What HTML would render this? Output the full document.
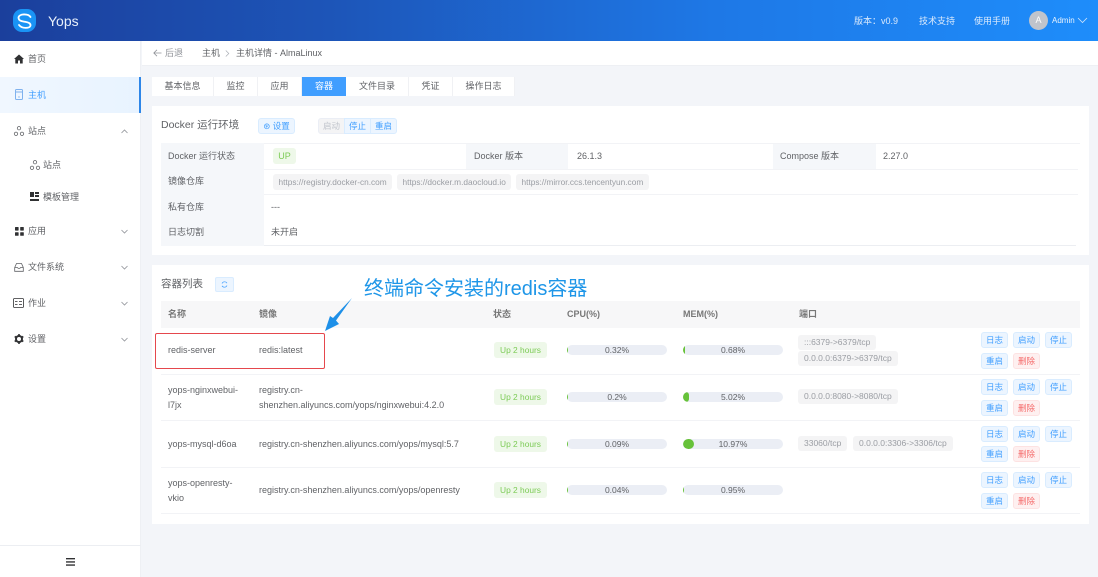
<!DOCTYPE html>
<html><head><meta charset="utf-8"><style>
*{box-sizing:border-box;margin:0;padding:0}
html,body{width:1098px;height:577px;overflow:hidden;background:#f3f5f9;font-family:"Liberation Sans","Noto Sans CJK SC",sans-serif;color:#606266;font-size:9px}
#w{position:absolute;left:0;top:0;width:1098px;height:577px;overflow:hidden;filter:blur(.35px)}
.a{position:absolute}
.t{position:absolute;white-space:nowrap;line-height:12px;height:12px}
.b{position:absolute;background:#fff}
.tag{position:absolute;height:15px;line-height:15px;border-radius:3px;background:#f4f4f5;color:#9a9da3;padding:0 6px;white-space:nowrap;font-size:8.5px}
.tag.u{height:16px;line-height:16px;font-size:8.3px;padding:0 5.5px}
.up{position:absolute;left:494px;width:53px;height:16px;line-height:16px;text-align:center;background:#eef8e9;color:#7ccb55;border-radius:3px;font-size:8.4px}
.bar{position:absolute;width:100px;height:10px;border-radius:5px;background:#ebeef5;overflow:hidden;text-align:center;line-height:10px;font-size:8.5px;color:#606266}
.bar i{position:absolute;left:0;top:0;height:10px;background:#67c23a;border-radius:5px}
.btn{position:absolute;width:27px;height:16px;line-height:15px;text-align:center;background:#ecf5ff;border:1px solid #d9ecff;color:#409eff;border-radius:3px;font-size:8.5px}
.btn.r{background:#fef0f0;border-color:#fde2e2;color:#f56c6c}
.line{position:absolute;height:1px;background:#f2f3f6}
.tab{position:absolute;top:77px;height:19px;line-height:19px;background:#fff;text-align:center;border-right:1px solid #f0f1f4;font-size:9px;color:#606266}
svg{position:absolute;overflow:visible}
</style></head><body><div id="w">

<!-- header -->
<div class="a" style="left:0;top:0;width:1098px;height:41px;background:linear-gradient(90deg,#1b3f9c 0%,#1d55b8 30%,#1e78e6 65%,#1e8dfb 100%)"></div>
<div class="a" style="left:13px;top:9px;width:23px;height:23px;border-radius:9px;background:#1a94f5"></div>
<svg style="left:13px;top:9px" width="23" height="23" viewBox="0 0 23 23"><path d="M17.5 8C15.5 4.5 6 4.5 5.5 8.5C5.5 12 9 12.2 12 12.8C15 13.4 17.8 14 17.5 16.5C17 19.5 9 20 6 16" fill="none" stroke="#fff" stroke-width="1.8" stroke-linecap="round"/></svg>
<div class="t" style="left:48px;top:13px;height:16px;line-height:16px;font-size:14px;color:#e8f0fb">Yops</div>
<div class="t" style="left:854px;top:15px;color:#dbeafc">版本：v0.9</div>
<div class="t" style="left:919px;top:15px;color:#dbeafc">技术支持</div>
<div class="t" style="left:974px;top:15px;color:#dbeafc">使用手册</div>
<div class="a" style="left:1029px;top:11px;width:19px;height:19px;border-radius:50%;background:#c0c4cc;color:#fff;text-align:center;line-height:19px;font-size:9px">A</div>
<div class="t" style="left:1052px;top:15px;color:#e8f2fd;font-size:8px">Admin</div>
<svg style="left:1077px;top:17px" width="11" height="7"><path d="M1 1L5.5 5.5L10 1" fill="none" stroke="#cfe4fb" stroke-width="0.8"/></svg>

<!-- sidebar -->
<div class="b" style="left:0;top:41px;width:141px;height:536px;border-right:1px solid #eef0f4"></div>
<div class="a" style="left:0;top:77px;width:141px;height:36px;background:linear-gradient(90deg,#f0f7ff,#e8f3ff);border-right:2px solid #2e86e8"></div>
<div class="line" style="left:0;top:545px;width:141px;background:#eceef2"></div>

<svg style="left:14px;top:54px" width="10" height="10" viewBox="0 0 10 10"><path d="M5 .5L10 5H8.7V9.5H6V6.5H4V9.5H1.3V5H0Z" fill="#303133"/></svg>
<div class="t" style="left:28px;top:53px">首页</div>
<svg style="left:15px;top:89px" width="8" height="11" viewBox="0 0 8 11"><rect x=".5" y=".5" width="7" height="10" rx="1" fill="none" stroke="#7fb2ee"/><path d="M1 3H7" stroke="#7fb2ee"/><circle cx="4" cy="8" r=".7" fill="#7fb2ee"/></svg>
<div class="t" style="left:28px;top:89px;color:#409eff">主机</div>
<svg style="left:14px;top:126px" width="10" height="10" viewBox="0 0 10 10"><g fill="none" stroke="#606266" stroke-width=".8"><circle cx="5" cy="2.2" r="1.7"/><circle cx="2" cy="7.8" r="1.7"/><circle cx="8" cy="7.8" r="1.7"/></g></svg>
<div class="t" style="left:28px;top:125px">站点</div>
<svg style="left:121px;top:129px" width="7" height="5"><path d="M.5 4L3.5 1L6.5 4" fill="none" stroke="#909399" stroke-width=".8"/></svg>
<svg style="left:30px;top:160px" width="10" height="10" viewBox="0 0 10 10"><g fill="none" stroke="#606266" stroke-width=".8"><circle cx="5" cy="2.2" r="1.7"/><circle cx="2" cy="7.8" r="1.7"/><circle cx="8" cy="7.8" r="1.7"/></g></svg>
<div class="t" style="left:43px;top:159px">站点</div>
<svg style="left:30px;top:192px" width="9" height="10" viewBox="0 0 9 10"><path d="M0 0H4V5H0ZM5 0H9V2H5ZM5 3H9V5H5ZM0 7H9V9H0Z" fill="#303133"/></svg>
<div class="t" style="left:43px;top:191px">模板管理</div>
<svg style="left:15px;top:227px" width="9" height="9" viewBox="0 0 9 9"><g fill="#303133"><rect width="3.6" height="3.6" rx=".6"/><rect x="5.2" width="3.6" height="3.6" rx=".6"/><rect y="5.2" width="3.6" height="3.6" rx=".6"/><rect x="5.2" y="5.2" width="3.6" height="3.6" rx=".6"/></g></svg>
<div class="t" style="left:28px;top:225px">应用</div>
<svg style="left:121px;top:229px" width="7" height="5"><path d="M.5 1L3.5 4L6.5 1" fill="none" stroke="#909399" stroke-width=".8"/></svg>
<svg style="left:14px;top:262px" width="10" height="10" viewBox="0 0 10 10"><path d="M.7 5.5L2.5 1.5H7.5L9.3 5.5V9.3H.7ZM.7 5.5H3.3Q5 7.5 6.7 5.5H9.3" fill="none" stroke="#606266" stroke-width=".8"/></svg>
<div class="t" style="left:28px;top:261px">文件系统</div>
<svg style="left:121px;top:265px" width="7" height="5"><path d="M.5 1L3.5 4L6.5 1" fill="none" stroke="#909399" stroke-width=".8"/></svg>
<svg style="left:13px;top:298px" width="11" height="10" viewBox="0 0 11 10"><rect x=".5" y=".5" width="10" height="9" rx="1" fill="none" stroke="#303133" stroke-width=".8"/><path d="M6 3.5H9M6 6.5H9M2 3.5H4.5M2 6.5H4.5" stroke="#303133" stroke-width=".8"/></svg>
<div class="t" style="left:28px;top:297px">作业</div>
<svg style="left:121px;top:301px" width="7" height="5"><path d="M.5 1L3.5 4L6.5 1" fill="none" stroke="#909399" stroke-width=".8"/></svg>
<svg style="left:14px;top:334px" width="10" height="10" viewBox="0 0 10 10"><circle cx="5" cy="5" r="3" fill="none" stroke="#303133" stroke-width="2"/><path d="M5 0V2M5 8V10M0.7 2.5L2.4 3.5M7.6 6.5L9.3 7.5M0.7 7.5L2.4 6.5M7.6 3.5L9.3 2.5" stroke="#303133" stroke-width="1.6"/></svg>
<div class="t" style="left:28px;top:333px">设置</div>
<svg style="left:121px;top:337px" width="7" height="5"><path d="M.5 1L3.5 4L6.5 1" fill="none" stroke="#909399" stroke-width=".8"/></svg>
<svg style="left:66px;top:558px" width="10" height="8" viewBox="0 0 10 8"><path d="M0 0H9V1.4H0ZM0 3.2H9V4.6H0ZM0 6.4H9V7.8H0Z" fill="#303133"/></svg>

<!-- breadcrumb -->
<div class="b" style="left:142px;top:41px;width:956px;height:25px;border-bottom:1px solid #eef0f4"></div>
<svg style="left:153px;top:49px" width="9" height="8"><path d="M8.5 4H.8M4 .8L.8 4L4 7.2" fill="none" stroke="#909399" stroke-width=".8"/></svg>
<div class="t" style="left:165px;top:47px;color:#909399">后退</div>
<div class="t" style="left:202px;top:47px">主机</div>
<svg style="left:225px;top:50px" width="5" height="7"><path d="M.8 .5L3.8 3.5L.8 6.5" fill="none" stroke="#aaaeb5" stroke-width=".7"/></svg>
<div class="t" style="left:236px;top:47px">主机详情 - AlmaLinux</div>

<!-- tabs -->
<div class="tab" style="left:152px;width:62px">基本信息</div>
<div class="tab" style="left:214px;width:44px">监控</div>
<div class="tab" style="left:258px;width:44px">应用</div>
<div class="tab" style="left:302px;width:44px;background:#409eff;color:#fff;border:0">容器</div>
<div class="tab" style="left:346px;width:63px">文件目录</div>
<div class="tab" style="left:409px;width:44px">凭证</div>
<div class="tab" style="left:453px;width:62px">操作日志</div>

<!-- card 1 -->
<div class="b" style="left:152px;top:106px;width:937px;height:149px"></div>
<div class="t" style="left:161px;top:118px;height:14px;line-height:14px;font-size:10.5px">Docker 运行环境</div>
<div class="a" style="left:258px;top:118px;width:37px;height:16px;line-height:15px;background:#ecf5ff;border:1px solid #d9ecff;border-radius:3px;color:#409eff;text-align:center;font-size:8.5px">⊛ 设置</div>
<div class="a" style="left:318px;top:118px;width:27px;height:16px;line-height:15px;background:#f4f4f5;border:1px solid #ebeef5;border-radius:3px 0 0 3px;color:#c0c4cc;text-align:center;font-size:8.5px">启动</div>
<div class="a" style="left:344px;top:118px;width:27px;height:16px;line-height:15px;background:#ecf5ff;border:1px solid #d9ecff;color:#409eff;text-align:center;font-size:8.5px">停止</div>
<div class="a" style="left:370px;top:118px;width:27px;height:16px;line-height:15px;background:#ecf5ff;border:1px solid #d9ecff;border-radius:0 3px 3px 0;color:#409eff;text-align:center;font-size:8.5px">重启</div>

<div class="a" style="left:161px;top:143px;width:103px;height:103px;background:#f5f7fa"></div>
<div class="a" style="left:466px;top:143px;width:102px;height:26px;background:#f5f7fa"></div>
<div class="a" style="left:773px;top:143px;width:103px;height:26px;background:#f5f7fa"></div>
<div class="line" style="left:264px;top:143px;width:816px"></div>
<div class="line" style="left:264px;top:169px;width:814px"></div>
<div class="line" style="left:264px;top:194px;width:814px"></div>
<div class="line" style="left:264px;top:245px;width:812px;background:#eceef2"></div>
<div class="t" style="left:168px;top:150px">Docker 运行状态</div>
<div class="t" style="left:168px;top:175px">镜像仓库</div>
<div class="t" style="left:168px;top:201px">私有仓库</div>
<div class="t" style="left:168px;top:226px">日志切割</div>
<div class="a" style="left:273px;top:148px;width:23px;height:16px;line-height:16px;text-align:center;background:#eef8e9;color:#7ccb55;border-radius:3px;font-size:9px">UP</div>
<div class="t" style="left:474px;top:150px">Docker 版本</div>
<div class="t" style="left:577px;top:150px">26.1.3</div>
<div class="t" style="left:780px;top:150px">Compose 版本</div>
<div class="t" style="left:883px;top:150px">2.27.0</div>
<div class="tag u" style="left:273px;top:174px">https://registry.docker-cn.com</div>
<div class="tag u" style="left:397px;top:174px">https://docker.m.daocloud.io</div>
<div class="tag u" style="left:516px;top:174px">https://mirror.ccs.tencentyun.com</div>
<div class="t" style="left:271px;top:201px">---</div>
<div class="t" style="left:271px;top:226px">未开启</div>

<!-- card 2 -->
<div class="b" style="left:152px;top:265px;width:937px;height:259px"></div>
<div class="t" style="left:161px;top:277px;height:14px;line-height:14px;font-size:10.5px">容器列表</div>
<div class="a" style="left:215px;top:277px;width:19px;height:15px;background:#ecf5ff;border:1px solid #d9ecff;border-radius:2px"></div>
<svg style="left:221px;top:281px" width="7" height="7" viewBox="0 0 7 7"><path d="M6 2.2A2.8 2.8 0 0 0 1 2.5M1 4.8A2.8 2.8 0 0 0 6 4.5" fill="none" stroke="#409eff" stroke-width=".7"/></svg>

<div class="a" style="left:161px;top:301px;width:919px;height:27px;background:#f7f7f8"></div>
<div class="t" style="left:168px;top:308px;font-weight:bold;color:#777">名称</div>
<div class="t" style="left:259px;top:308px;font-weight:bold;color:#777">镜像</div>
<div class="t" style="left:493px;top:308px;font-weight:bold;color:#777">状态</div>
<div class="t" style="left:567px;top:308px;font-weight:bold;color:#777">CPU(%)</div>
<div class="t" style="left:683px;top:308px;font-weight:bold;color:#777">MEM(%)</div>
<div class="t" style="left:799px;top:308px;font-weight:bold;color:#777">端口</div>

<div class="line" style="left:161px;top:374px;width:919px"></div>
<div class="line" style="left:161px;top:420px;width:919px"></div>
<div class="line" style="left:161px;top:467px;width:919px"></div>
<div class="line" style="left:161px;top:513px;width:919px"></div>

<!-- row 1 -->
<div class="t" style="left:168px;top:344px">redis-server</div>
<div class="t" style="left:259px;top:344px">redis:latest</div>
<div class="up" style="top:342px">Up 2 hours</div>
<div class="bar" style="left:567px;top:345px"><i style="width:1px"></i>0.32%</div>
<div class="bar" style="left:683px;top:345px"><i style="width:1.5px"></i>0.68%</div>
<div class="tag" style="left:798px;top:335px">:::6379-&gt;6379/tcp</div>
<div class="tag" style="left:798px;top:351px">0.0.0.0:6379-&gt;6379/tcp</div>
<div class="btn" style="left:981px;top:332px">日志</div>
<div class="btn" style="left:1013px;top:332px">启动</div>
<div class="btn" style="left:1045px;top:332px">停止</div>
<div class="btn" style="left:981px;top:353px">重启</div>
<div class="btn r" style="left:1013px;top:353px">删除</div>

<!-- row 2 -->
<div class="t" style="left:168px;top:384px">yops-nginxwebui-</div>
<div class="t" style="left:168px;top:399px">l7jx</div>
<div class="t" style="left:259px;top:384px">registry.cn-</div>
<div class="t" style="left:259px;top:399px">shenzhen.aliyuncs.com/yops/nginxwebui:4.2.0</div>
<div class="up" style="top:389px">Up 2 hours</div>
<div class="bar" style="left:567px;top:392px"><i style="width:1px"></i>0.2%</div>
<div class="bar" style="left:683px;top:392px"><i style="width:5.5px"></i>5.02%</div>
<div class="tag" style="left:798px;top:389px">0.0.0.0:8080-&gt;8080/tcp</div>
<div class="btn" style="left:981px;top:379px">日志</div>
<div class="btn" style="left:1013px;top:379px">启动</div>
<div class="btn" style="left:1045px;top:379px">停止</div>
<div class="btn" style="left:981px;top:400px">重启</div>
<div class="btn r" style="left:1013px;top:400px">删除</div>

<!-- row 3 -->
<div class="t" style="left:168px;top:438px">yops-mysql-d6oa</div>
<div class="t" style="left:259px;top:438px">registry.cn-shenzhen.aliyuncs.com/yops/mysql:5.7</div>
<div class="up" style="top:436px">Up 2 hours</div>
<div class="bar" style="left:567px;top:439px"><i style="width:1px"></i>0.09%</div>
<div class="bar" style="left:683px;top:439px"><i style="width:11px"></i>10.97%</div>
<div class="tag" style="left:798px;top:436px">33060/tcp</div>
<div class="tag" style="left:853px;top:436px">0.0.0.0:3306-&gt;3306/tcp</div>
<div class="btn" style="left:981px;top:426px">日志</div>
<div class="btn" style="left:1013px;top:426px">启动</div>
<div class="btn" style="left:1045px;top:426px">停止</div>
<div class="btn" style="left:981px;top:446px">重启</div>
<div class="btn r" style="left:1013px;top:446px">删除</div>

<!-- row 4 -->
<div class="t" style="left:168px;top:477px">yops-openresty-</div>
<div class="t" style="left:168px;top:492px">vkio</div>
<div class="t" style="left:259px;top:484px">registry.cn-shenzhen.aliyuncs.com/yops/openresty</div>
<div class="up" style="top:482px">Up 2 hours</div>
<div class="bar" style="left:567px;top:485px"><i style="width:1px"></i>0.04%</div>
<div class="bar" style="left:683px;top:485px"><i style="width:1px"></i>0.95%</div>
<div class="btn" style="left:981px;top:472px">日志</div>
<div class="btn" style="left:1013px;top:472px">启动</div>
<div class="btn" style="left:1045px;top:472px">停止</div>
<div class="btn" style="left:981px;top:493px">重启</div>
<div class="btn r" style="left:1013px;top:493px">删除</div>

<!-- annotations -->
<div class="a" style="left:155px;top:333px;width:170px;height:36px;border:1.2px solid #e5484d;border-radius:2px"></div>
<svg style="left:320px;top:295px" width="40" height="40" viewBox="0 0 40 40"><path d="M32 3L16 25.5L19 29L5 36L10 21L13 23Z" fill="#1e90e8"/></svg>
<div class="t" style="left:364px;top:278px;height:22px;line-height:22px;font-size:20px;color:#1e96e8">终端命令安装的redis容器</div>
</div></body></html>
